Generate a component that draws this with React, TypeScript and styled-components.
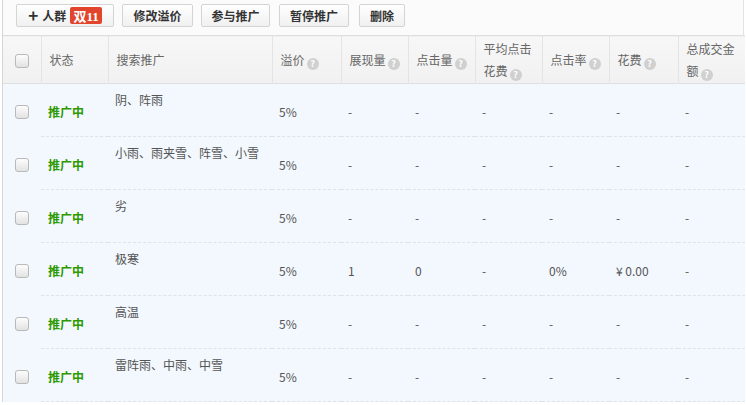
import styled, { createGlobalStyle } from "styled-components";

const GlobalStyle = createGlobalStyle`
  html, body {
    margin: 0;
    padding: 0;
    background: #fff;
  }
  body {
    font-family: "Noto Sans CJK SC", "Microsoft YaHei", sans-serif;
    font-size: 12px;
    color: #555;
  }
`;

const COLS = [38, 67, 164, 69, 67, 67, 67, 67, 69, 67];

const Page = styled.div`
  margin-left: 2px;
  width: 742px;
  border-left: 1px solid #d6d6d6;
  border-right: 1px solid #e3e3e3;
  box-sizing: border-box;
`;

const Toolbar = styled.div`
  display: flex;
  align-items: flex-start;
  height: 35px;
  padding: 4px 0 0 13px;
  box-sizing: border-box;
  background: #fbfbfb;
`;

const Button = styled.button<{ $w: number; $gap?: number }>`
  display: flex;
  align-items: center;
  justify-content: center;
  gap: 4px;
  width: ${(p) => p.$w}px;
  height: 23px;
  margin-right: ${(p) => p.$gap ?? 8}px;
  padding: 0;
  border: 1px solid #d4d4d4;
  border-radius: 2px;
  background: linear-gradient(#ffffff, #f0f0f0);
  font-family: inherit;
  font-size: 12px;
  font-weight: bold;
  color: #333;
  cursor: pointer;
`;

const Plus = styled.span`
  font-size: 17px;
  font-weight: bold;
  line-height: 1;
  margin-top: -2px;
`;

const Badge = styled.span`
  display: inline-flex;
  align-items: center;
  height: 17px;
  padding: 0 3px;
  background: #e2452d;
  border-radius: 2px;
  color: #fff;
  font-family: "Liberation Serif", "Noto Sans CJK SC", serif;
  font-size: 13px;
  font-weight: bold;
`;

const Table = styled.table`
  width: 741px;
  border-collapse: collapse;
  table-layout: fixed;
`;

const HeadRow = styled.tr`
  height: 48px;
  background: linear-gradient(#f7f7f7, #f1f1f1);
  border-top: 1px solid #dedede;
  border-bottom: 1px solid #e0e0e0;
`;

const Th = styled.th`
  padding: 0 4px 0 8px;
  text-align: left;
  font-weight: normal;
  color: #666;
  line-height: 22px;
  border-left: 1px solid #e4e4e4;
  vertical-align: middle;
  &:first-child {
    border-left: none;
    padding: 0 0 0 12px;
  }
`;

const HeadLine = styled.div`
  white-space: nowrap;
`;

const Help = styled.span`
  display: inline-block;
  width: 12px;
  height: 12px;
  margin-left: 2px;
  border-radius: 50%;
  background: #d0d0d0;
  color: #fff;
  font-size: 9px;
  font-weight: bold;
  line-height: 12px;
  text-align: center;
  vertical-align: -2px;
`;

const Row = styled.tr`
  height: 53px;
  background: #f2f8fd;
`;

const Td = styled.td<{ $top?: boolean }>`
  padding: ${(p) => (p.$top ? "7px 7px 0" : "3px 7px 0")};
  vertical-align: ${(p) => (p.$top ? "top" : "middle")};
  border-bottom: 1px dashed #dde3e8;
  color: #555;
  line-height: 18px;
  white-space: nowrap;
  &:first-child {
    border-bottom: none;
    padding: 0 0 0 12px;
  }
`;

const Status = styled.span`
  color: #2e9900;
  font-weight: bold;
`;

const Check = styled.span`
  display: inline-block;
  width: 12px;
  height: 12px;
  border: 1px solid #b9b9b9;
  border-radius: 3px;
  background: linear-gradient(#fdfdfd, #e2e2e2);
  vertical-align: middle;
`;

const heads: { lines: string[]; help?: boolean }[] = [
  { lines: ["状态"] },
  { lines: ["搜索推广"] },
  { lines: ["溢价"], help: true },
  { lines: ["展现量"], help: true },
  { lines: ["点击量"], help: true },
  { lines: ["平均点击", "花费"], help: true },
  { lines: ["点击率"], help: true },
  { lines: ["花费"], help: true },
  { lines: ["总成交金", "额"], help: true },
];

const rows: { kw: string; vals: string[] }[] = [
  { kw: "阴、阵雨", vals: ["5%", "-", "-", "-", "-", "-", "-"] },
  { kw: "小雨、雨夹雪、阵雪、小雪", vals: ["5%", "-", "-", "-", "-", "-", "-"] },
  { kw: "劣", vals: ["5%", "-", "-", "-", "-", "-", "-"] },
  { kw: "极寒", vals: ["5%", "1", "0", "-", "0%", "¥ 0.00", "-"] },
  { kw: "高温", vals: ["5%", "-", "-", "-", "-", "-", "-"] },
  { kw: "雷阵雨、中雨、中雪", vals: ["5%", "-", "-", "-", "-", "-", "-"] },
];

export default function App() {
  return (
    <Page>
      <GlobalStyle />
      <Toolbar>
        <Button $w={98}>
          <Plus>+</Plus>人群<Badge>双11</Badge>
        </Button>
        <Button $w={71}>修改溢价</Button>
        <Button $w={69} $gap={9}>参与推广</Button>
        <Button $w={70} $gap={10}>暂停推广</Button>
        <Button $w={46}>删除</Button>
      </Toolbar>
      <Table>
        <colgroup>
          {COLS.map((w, i) => (
            <col key={i} style={{ width: w }} />
          ))}
        </colgroup>
        <thead>
          <HeadRow>
            <Th>
              <Check />
            </Th>
            {heads.map((h) => (
              <Th key={h.lines.join("")}>
                {h.lines.map((line, i) => (
                  <HeadLine key={i}>
                    {line}
                    {h.help && i === h.lines.length - 1 && <Help>?</Help>}
                  </HeadLine>
                ))}
              </Th>
            ))}
          </HeadRow>
        </thead>
        <tbody>
          {rows.map((r) => (
            <Row key={r.kw}>
              <Td>
                <Check />
              </Td>
              <Td>
                <Status>推广中</Status>
              </Td>
              <Td $top>{r.kw}</Td>
              {r.vals.map((v, i) => (
                <Td key={i}>{v}</Td>
              ))}
            </Row>
          ))}
        </tbody>
      </Table>
    </Page>
  );
}
